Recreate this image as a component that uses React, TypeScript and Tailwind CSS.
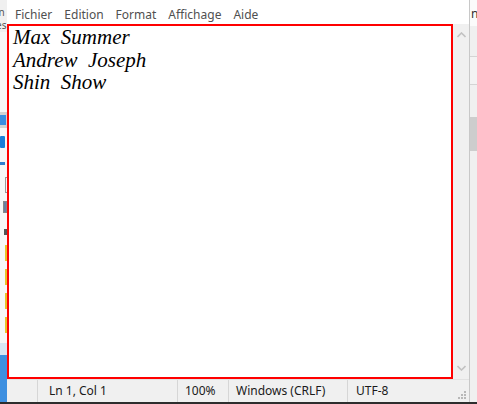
import React from "react";

const ui = { fontFamily: '"Noto Sans", "Open Sans", Arial, sans-serif' };
const serif = { fontFamily: '"Liberation Serif", "Times New Roman", serif' };

function Chevron({ up }: { up?: boolean }) {
  return (
    <svg width="9" height="6" viewBox="0 0 9 6" className="block">
      <path
        d={up ? "M0.5 5 L4.5 1 L8.5 5" : "M0.5 1 L4.5 5 L8.5 1"}
        fill="none"
        stroke="#c2c2c2"
        strokeWidth="1.6"
      />
    </svg>
  );
}

export default function App() {
  return (
    <div className="w-[477px] h-[404px] overflow-hidden bg-[#f3f3f3] flex flex-col" style={ui}>
      <div className="flex h-[402px]">
        {/* left desktop strip */}
        <div className="w-[7px] flex flex-col bg-[#f7f7f7] overflow-hidden">
          <div className="h-[32px] bg-[#f0f0f0] text-[10px] leading-[13px] text-[#555] pt-[6px] -ml-[4px] whitespace-nowrap">
            <div>in</div>
            <div>es</div>
          </div>
          <div className="h-[80px]" />
          <div className="h-[16px] bg-[#d2d2d2] flex items-center">
            <div className="w-[6px] h-[10px] bg-[#3a8de0]" />
          </div>
          <div className="h-[8px]" />
          <div className="h-[12px] w-[5px] bg-[#1a7ed8] rounded-[1px]" />
          <div className="h-[14px]" />
          <div className="h-[3px] w-[5px] bg-[#2f7fd0]" />
          <div className="h-[12px]" />
          <div className="h-[16px] w-[3px] border border-[#999] ml-[5px]" />
          <div className="h-[8px]" />
          <div className="h-[12px] w-[4px] bg-[#6a7fa0] border border-[#888] ml-[3px]" />
          <div className="h-[16px]" />
          <div className="h-[6px] w-[3px] bg-[#555] ml-[4px]" />
          <div className="h-[10px]" />
          <div className="h-[16px] w-[3px] bg-[#e7c42b] ml-[5px]" />
          <div className="h-[8px]" />
          <div className="h-[16px] w-[3px] bg-[#e7c42b] ml-[5px]" />
          <div className="h-[8px]" />
          <div className="h-[16px] w-[3px] bg-[#e7c42b] ml-[5px]" />
          <div className="h-[8px]" />
          <div className="h-[16px] w-[3px] bg-[#e7c42b] ml-[5px]" />
          <div className="h-[10px]" />
          <div className="h-[12px] bg-[#d8e6f4]" />
          <div className="flex-1 bg-[#3d8fe0]" />
        </div>

        {/* notepad window */}
        <div className="w-[462px] flex flex-col bg-white">
          <div className="h-[24px] flex items-center text-[12px] text-[#505050] pl-[8px] gap-[12px] pt-[6px]">
            <span>Fichier</span>
            <span>Edition</span>
            <span>Format</span>
            <span>Affichage</span>
            <span>Aide</span>
          </div>
          <div className="flex h-[355px]">
            <div className="w-[446px] border-2 border-[#ff0000] bg-white pl-[4px] pt-[0px]">
              <div className="italic text-[21px] leading-[22.5px] text-black whitespace-pre" style={serif}>
                <div>Max  Summer</div>
                <div>Andrew  Joseph</div>
                <div>Shin  Show</div>
              </div>
            </div>
            <div className="w-[16px] bg-[#f0f0f0] flex flex-col items-center justify-between py-[8px]">
              <Chevron up />
              <Chevron />
            </div>
          </div>
          <div className="flex-1 bg-[#f0f0f0] border-t border-[#e2e2e2] flex text-[12px] text-[#1a1a1a] items-center relative">
            <div className="w-[31px] h-full border-r border-[#d6d6d6]" />
            <div className="w-[140px] h-full border-r border-[#d6d6d6] pl-[11px] flex items-center">Ln 1, Col 1</div>
            <div className="w-[51px] h-full border-r border-[#d6d6d6] pl-[7px] flex items-center">100%</div>
            <div className="w-[119px] h-full border-r border-[#d6d6d6] pl-[7px] flex items-center">Windows (CRLF)</div>
            <div className="flex-1 h-full pl-[8px] flex items-center">UTF-8</div>
            <svg width="10" height="10" viewBox="0 0 10 10" className="absolute right-[2px] bottom-[2px]">
              <rect x="7" y="1" width="2" height="2" fill="#b8b8b8" />
              <rect x="4" y="4" width="2" height="2" fill="#b8b8b8" />
              <rect x="7" y="4" width="2" height="2" fill="#b8b8b8" />
              <rect x="1" y="7" width="2" height="2" fill="#b8b8b8" />
              <rect x="4" y="7" width="2" height="2" fill="#b8b8b8" />
              <rect x="7" y="7" width="2" height="2" fill="#b8b8b8" />
            </svg>
          </div>
        </div>

        {/* right desktop strip */}
        <div className="flex-1 flex flex-col border-l border-[#c8c8c8] overflow-hidden">
          <div className="h-[26px] bg-[#fbfbfb] text-[12px] text-[#333] pt-[5px] whitespace-nowrap pl-[1px]">nc</div>
          <div className="h-[31px] bg-[#f0f0f0] border-b border-[#d4d4d4]" />
          <div className="h-[28px] bg-[#f3f3f3] border-b border-[#d4d4d4]" />
          <div className="h-[32px] bg-[#f0f0f0]" />
          <div className="h-[34px] bg-[#cdcdcd]" />
          <div className="flex-1 bg-[#f0f0f0]" />
        </div>
      </div>
      <div className="flex-1 bg-[#2d2d2d]" />
    </div>
  );
}
